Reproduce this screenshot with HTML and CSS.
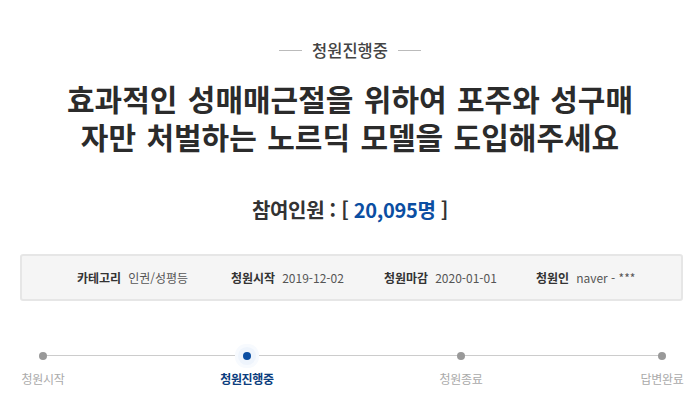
FILE: index.html
```html
<!DOCTYPE html>
<html lang="ko">
<head>
<meta charset="utf-8">
<link rel="stylesheet" href="styles.css">
</head>
<body>
<div class="page">
  <div class="status"><span class="rule"></span><span class="status-text">청원진행중</span><span class="rule"></span></div>
  <h1 class="title">효과적인 성매매근절을 위하여 포주와 성구매<br>자만 처벌하는 노르딕 모델을 도입해주세요</h1>
  <div class="count">참여인원 : [ <span class="num">20,095명</span> ]</div>
  <div class="info">
    <div class="item"><span class="label">카테고리</span><span class="value">인권/성평등</span></div>
    <div class="item"><span class="label">청원시작</span><span class="value">2019-12-02</span></div>
    <div class="item"><span class="label">청원마감</span><span class="value">2020-01-01</span></div>
    <div class="item"><span class="label">청원인</span><span class="value">naver - ***</span></div>
  </div>
  <div class="progress">
    <div class="step"><span class="dot"></span><span class="step-label">청원시작</span></div>
    <div class="step active"><span class="dot"></span><span class="step-label">청원진행중</span></div>
    <div class="step"><span class="dot"></span><span class="step-label">청원종료</span></div>
    <div class="step"><span class="dot"></span><span class="step-label">답변완료</span></div>
  </div>
</div>
</body>
</html>
```
FILE: styles.css
```css
html, body {
  margin: 0;
  padding: 0;
  background: #fff;
}
body {
  font-family: "Noto Sans CJK KR", "Noto Sans", sans-serif;
  color: #333;
  width: 700px;
  height: 415px;
  overflow: hidden;
}
.page {
  display: flex;
  flex-direction: column;
  align-items: center;
  padding-top: 38px;
}
.status {
  display: flex;
  align-items: center;
  gap: 10px;
  height: 24px;
}
.rule {
  width: 23px;
  height: 1px;
  background: #bbb;
}
.status-text {
  font-size: 16.5px;
  line-height: 24px;
  color: #444;
  font-weight: 500;
}
.title {
  margin: 17px 0 0;
  font-size: 30px;
  line-height: 38px;
  font-weight: 700;
  text-align: center;
  word-spacing: 2px;
  color: #2b2b2b;
}
.count {
  margin-top: 41px;
  font-size: 20px;
  line-height: 28px;
  font-weight: 700;
  color: #333;
  letter-spacing: -0.3px;
}
.num {
  color: #0b4ea2;
}
.info {
  margin-top: 30px;
  align-self: flex-start;
  margin-left: 20px;
  width: 659px;
  height: 43px;
  box-sizing: content-box;
  border: 2px solid #e6e6e6;
  border-radius: 3px;
  background: #f5f5f5;
  display: flex;
  align-items: center;
}
.item {
  display: flex;
  align-items: center;
  gap: 7px;
  font-size: 12px;
  line-height: 16px;
}
.item:nth-child(1) { margin-left: 55px; width: 154px; }
.item:nth-child(2) { width: 153px; }
.item:nth-child(3) { width: 152px; }
.label {
  font-weight: 700;
  color: #333;
}
.value {
  color: #555;
}
.progress {
  align-self: flex-start;
  margin-top: 47px;
  width: 700px;
  display: flex;
  position: relative;
}
.progress::before {
  content: "";
  position: absolute;
  left: 43px;
  width: 619px;
  top: 7px;
  height: 1px;
  background: #ccc;
}
.step {
  width: 60px;
  display: flex;
  flex-direction: column;
  align-items: center;
  position: relative;
}
.step:nth-child(1) { margin-left: 13px; }
.step:nth-child(2) { margin-left: 144px; }
.step:nth-child(3) { margin-left: 154px; }
.step:nth-child(4) { margin-left: 141px; }
.dot {
  width: 8px;
  height: 8px;
  border-radius: 50%;
  background: #999;
  margin-top: 4px;
}
.step.active .dot {
  background: #0b4ea2;
  box-shadow: 0 0 0 5px #eef4fc, 0 0 0 8px #f7fafe;
}
.step-label {
  margin-top: 10px;
  font-size: 12px;
  line-height: 18px;
  letter-spacing: -0.3px;
  color: #aaa;
  white-space: nowrap;
}
.step.active .step-label {
  color: #0b3d7e;
  font-weight: 700;
}
```
